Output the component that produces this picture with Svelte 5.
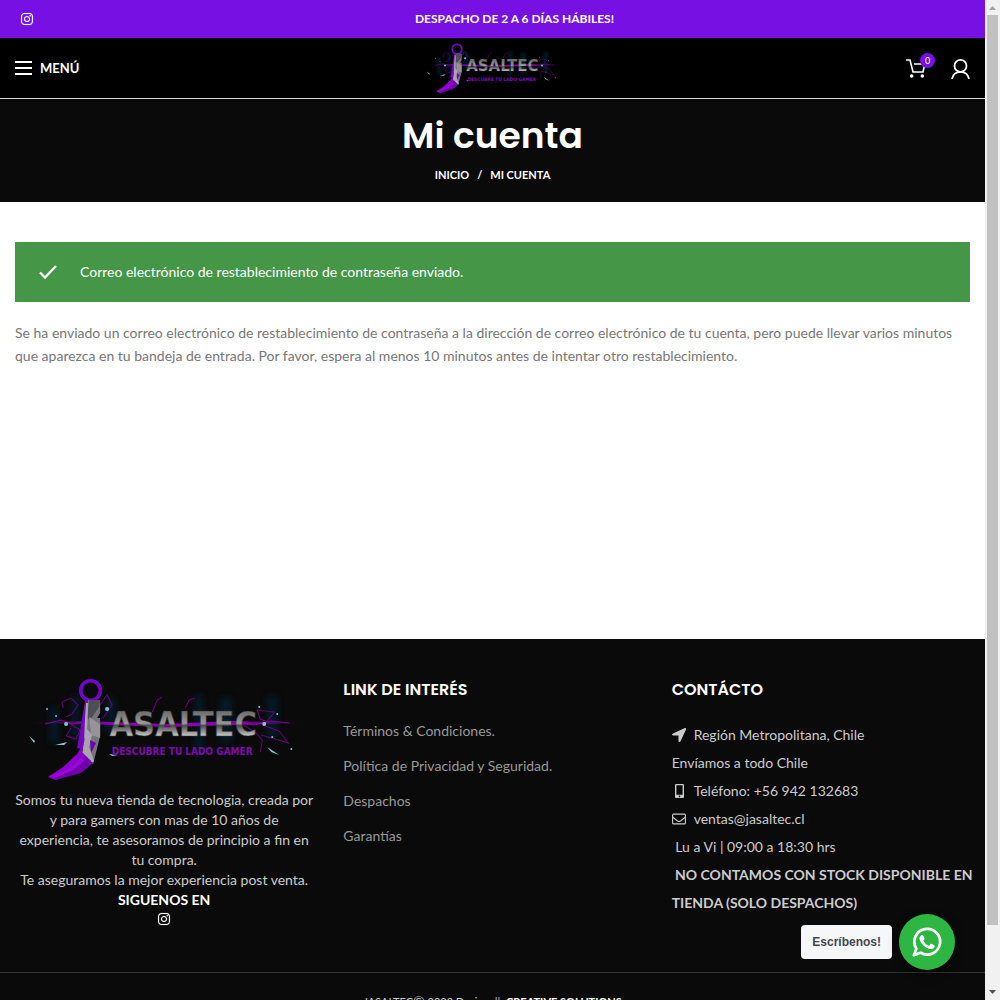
<script>
  const links = ['Términos & Condiciones.', 'Política de Privacidad y Seguridad.', 'Despachos', 'Garantías'];
</script>

{#snippet instagram()}
  <svg class="insta" viewBox="0 0 448 512" aria-hidden="true">
    <path d="M224 141c-64 0-115 51-115 115s51 115 115 115 115-51 115-115-51-115-115-115zm0 190c-41 0-75-34-75-75s34-75 75-75 75 34 75 75-34 75-75 75zM371 136a27 27 0 1 1-54 0 27 27 0 0 1 54 0zm76 27c-2-36-10-68-36-94s-58-34-94-36c-37-2-148-2-185 0-36 2-67 10-94 36S4 127 2 163c-2 37-2 148 0 185 2 36 10 68 36 94s58 34 94 36c37 2 148 2 185 0 36-2 68-10 94-36s34-58 36-94c2-37 2-148 0-185zm-48 225a76 76 0 0 1-43 43c-29 12-99 9-132 9s-103 3-132-9a76 76 0 0 1-43-43c-12-29-9-99-9-132s-3-103 9-132a76 76 0 0 1 43-43c29-12 99-9 132-9s103-3 132 9a76 76 0 0 1 43 43c12 29 9 99 9 132s3 103-9 132z" />
  </svg>
{/snippet}

{#snippet logo(id)}
  <svg class="logo" viewBox="0 0 298 105" role="img" aria-label="Jasaltec, descubre tu lado gamer">
    <defs>
      <linearGradient id="{id}-metal" x1="0" y1="0" x2="0" y2="1">
        <stop offset="0.2" stop-color="#6f6f6f" />
        <stop offset="0.48" stop-color="#9a9a9a" />
        <stop offset="0.54" stop-color="#4b4b4b" />
        <stop offset="0.8" stop-color="#cacaca" />
      </linearGradient>
      <linearGradient id="{id}-beam">
        <stop offset="0" stop-color="#8b00b0" stop-opacity="0" />
        <stop offset="0.3" stop-color="#8d00b0" />
        <stop offset="0.75" stop-color="#8d00b0" />
        <stop offset="1" stop-color="#8b00b0" stop-opacity="0" />
      </linearGradient>
      <filter id="{id}-glow" x="-20%" y="-20%" width="140%" height="140%"><feGaussianBlur stdDeviation="3" /></filter>
    </defs>
    <g fill="#06263d" opacity=".6" filter="url(#{id}-glow)">
      <path d="M35 30h8v35h-8zM57 18h7v45h-7zM91 20h9v35h-9zM180 17h8v55h-8zM205 20h12v45h-12zM252 18h10v42h-10z" />
    </g>
    <path d="M12 45L70 43L150 46L220 43L290 45L220 47L150 49L70 46Z" fill="url(#{id}-beam)" />
    <g fill="none" stroke="#86009f" stroke-width="1" opacity=".75">
      <path d="M48 30l-1-6 9-4 7 7-6 9-6 3M52 44l13 8-4 9-10-3 5-8M84 28l8-11 5 10-9 13M228 47l12 7 7 8-2 12M252 44l-7-3-3-9 17 2-11 14M250 48l14 5 9 12-10-3-17-5M137 34l5-12 5-3M170 30l4-8 6-2" />
      <path d="M30 46l16-4 12 4 16-3M222 43l16 4 18-4 18 2" stroke="#a000b8" />
    </g>
    <g fill="#85c7d0">
      <circle cx="51" cy="46" r="2" /><circle cx="92" cy="31" r="2" /><circle cx="41" cy="38" r="1" />
      <circle cx="249" cy="46" r="2" /><circle cx="244" cy="29" r="1" /><circle cx="262" cy="36" r="1" />
      <circle cx="32" cy="31" r="1" /><circle cx="257" cy="59" r="1" /><circle cx="276" cy="71" r="1" />
      <path d="M14 58l6 5-1 2zM252 69l12 8-8-3zM40 67l12-3-3 3zM94 76l9 1-6 1z" />
    </g>
    <circle cx="75.500" cy="12.500" r="9.800" fill="none" stroke="#7405c4" stroke-width="3.600" />
    <path d="M70 23h15l-3 17-7 8-6 24-7-2z" fill="#7408bd" />
    <path d="M73 22h12v13l-3 5h3v18l-7 28-11-9 4-20-1-12z" fill="#77757c" />
    <path d="M74 22h11l-1 7-9 13-3-2z" fill="#504e55" />
    <path d="M74 39l11 7v14l-9-3z" fill="#96939b" />
    <path d="M71 25h2l-1 31-3 5 1-22zM71 50l6 7-3 12 5 14-2 2-10-9 3-18z" fill="#aaa5ad" />
    <path d="M75 62l6 3-5 10z" fill="#6c00bd" />
    <path d="M67 68l-5 8-14 13-15 10 8 3 23-9 12-10-9-9z" fill="#8b00cc" />
    <path d="M33 99l22-8 14-13 9 7-12 10-26 7z" fill="#7000ac" />
    <path d="M34 98l18-6 14-12 3 3-13 10-17 7z" fill="#a100de" />
    <text class="logo-name" x="168" y="58" text-anchor="middle" fill="url(#{id}-metal)" stroke="#333" stroke-width=".5">ASALTEC</text>
    <text class="logo-tag" x="167" y="77" text-anchor="middle" fill="#7d0ab0">DESCUBRE TU LADO GAMER</text>
  </svg>
{/snippet}

<div class="window">
  <div class="page">
    <div class="topbar">
      <a class="social" href="#instagram" aria-label="Instagram">{@render instagram()}</a>
      <strong>DESPACHO DE 2 A 6 DÍAS HÁBILES!</strong>
    </div>

    <header>
      <button class="menu">
        <svg width="17" height="14" viewBox="0 0 17 14" aria-hidden="true"><path d="M0 0h17v2H0zM0 6h17v2H0zM0 12h17v2H0z" fill="#fff" /></svg>
        MENÚ
      </button>
      <a class="brand" href="#inicio">{@render logo('head')}</a>
      <div class="tools">
        <a class="cart" href="#carrito" aria-label="Carrito">
          <svg width="20" height="20" viewBox="0 0 20 20" fill="none" stroke="#fff" stroke-width="1.600" aria-hidden="true">
            <path d="M0 1h4l3 12h10l2-9M8 5h11" /><circle cx="5.700" cy="17" r="1.800" fill="#fff" stroke="none" /><circle cx="16.300" cy="17" r="1.800" fill="#fff" stroke="none" />
          </svg>
          <span class="badge">0</span>
        </a>
        <a href="#cuenta" aria-label="Mi cuenta">
          <svg width="19" height="20" viewBox="0 0 19 20" fill="none" stroke="#fff" stroke-width="1.800" aria-hidden="true">
            <circle cx="9.500" cy="6.900" r="6" /><path d="M1 20c1-5 4-7.100 8.500-7.100s7.500 2.100 8.500 7.100" />
          </svg>
        </a>
      </div>
    </header>

    <section class="title">
      <h1>Mi cuenta</h1>
      <nav aria-label="Ruta"><a href="#inicio">INICIO</a><span>/</span><span>MI CUENTA</span></nav>
    </section>

    <main>
      <div class="alert" role="alert">
        <svg width="18" height="14" viewBox="0 0 18 14" aria-hidden="true"><path d="M1 7.500l5 5L17 1" fill="none" stroke="#fff" stroke-width="2.300" /></svg>
        Correo electrónico de restablecimiento de contraseña enviado.
      </div>
      <p>Se ha enviado un correo electrónico de restablecimiento de contraseña a la dirección de correo electrónico de tu cuenta, pero puede llevar varios minutos que aparezca en tu bandeja de entrada. Por favor, espera al menos 10 minutos antes de intentar otro restablecimiento.</p>
    </main>

    <footer>
      <div class="columns">
        <section class="about">
          {@render logo('foot')}
          <p>Somos tu nueva tienda de tecnologia, creada por y para gamers con mas de 10 años de experiencia, te asesoramos de principio a fin en tu compra.<br />Te aseguramos la mejor experiencia post venta.</p>
          <strong>SIGUENOS EN</strong>
          <a class="social" href="#instagram" aria-label="Instagram">{@render instagram()}</a>
        </section>
        <section>
          <h2>LINK DE INTERÉS</h2>
          <ul>
            {#each links as link}
              <li><a href="#info">{link}</a></li>
            {/each}
          </ul>
        </section>
        <section>
          <h2>CONTÁCTO</h2>
          <address>
            <div class="line"><svg width="14" height="14" viewBox="0 0 14 14" aria-hidden="true"><path d="M13 0L1 5.500C-.5 6 0 7.500 1 7.500h5.500V13c0 1 1.500 1.500 2 .3L14 1.500C14.300.5 13.800-.2 13 0z" fill="#ccc" /></svg>Región Metropolitana, Chile</div>
            <div>Envíamos a todo Chile</div>
            <div class="line"><svg width="14" height="14" viewBox="0 0 14 14" aria-hidden="true"><path fill-rule="evenodd" d="M4 0h7a1 1 0 0 1 1 1v12a1 1 0 0 1-1 1H4a1 1 0 0 1-1-1V1a1 1 0 0 1 1-1zm.4 1.300v9.400h6.200V1.300zM7.500 11.500a.8.800 0 1 0 .01 0z" fill="#ccc" /></svg>Teléfono: +56 942 132683</div>
            <div class="line"><svg width="14" height="14" viewBox="0 0 14 14" aria-hidden="true"><rect x=".6" y="2.100" width="12.800" height="9.800" rx="1" fill="none" stroke="#ccc" stroke-width="1.100" /><path d="M.6 5l4.900 4q1.500 1.100 3 0l4.900-4" fill="none" stroke="#ccc" stroke-width="1.100" /></svg>ventas@jasaltec.cl</div>
            <div>&nbsp;Lu a Vi | 09:00 a 18:30 hrs</div>
            <strong>&nbsp;NO CONTAMOS CON STOCK DISPONIBLE EN<br />TIENDA (SOLO DESPACHOS)</strong>
          </address>
        </section>
      </div>
      <div class="copyright">JASALTEC<span class="mark">©</span> 2022 Design &nbsp;|| &nbsp;<strong>CREATIVE SOLUTIONS</strong></div>
    </footer>
  </div>

  <div class="scrollbar" aria-hidden="true">
    <svg width="15" height="15" viewBox="0 0 15 15"><path d="M4 10h7L7.500 6z" fill="#a3a3a3" /></svg>
    <div class="thumb"></div>
    <svg width="15" height="15" viewBox="0 0 15 15"><path d="M4 5h7L7.500 9z" fill="#505050" /></svg>
  </div>

  <div class="chat">
    <span>Escríbenos!</span>
    <button aria-label="WhatsApp">
      <svg width="30" height="30" viewBox="0 0 24 24" fill="#fff" aria-hidden="true"><path d="M17.472 14.382c-.297-.149-1.758-.867-2.030-.967-.273-.099-.471-.148-.670.150-.197.297-.767.966-.940 1.164-.173.199-.347.223-.644.075-.297-.150-1.255-.463-2.390-1.475-.883-.788-1.480-1.761-1.653-2.059-.173-.297-.018-.458.130-.606.134-.133.298-.347.446-.520.149-.174.198-.298.298-.497.099-.198.050-.371-.025-.520-.075-.149-.669-1.612-.916-2.207-.242-.579-.487-.500-.669-.510-.173-.008-.371-.010-.570-.010-.198 0-.520.074-.792.372-.272.297-1.040 1.016-1.040 2.479 0 1.462 1.065 2.875 1.213 3.074.149.198 2.096 3.200 5.077 4.487.709.306 1.262.489 1.694.625.712.227 1.360.195 1.871.118.571-.085 1.758-.719 2.006-1.413.248-.694.248-1.289.173-1.413-.074-.124-.272-.198-.570-.347z" /><path d="M3.500 17.300L1.500 22.500l5.400-1.900A10.300 10.300 0 1 0 3.500 17.300z" fill="none" stroke="#fff" stroke-width="2.200" stroke-linejoin="round" /></svg>
    </button>
  </div>
</div>

<style>
  :global(body) { margin: 0; }
  * { box-sizing: border-box; }
  a { color: inherit; text-decoration: none; }
  button { border: 0; padding: 0; background: none; color: inherit; font: inherit; cursor: pointer; }
  p, h1, h2, ul { margin: 0; padding: 0; }
  strong { font-weight: 700; }
  svg { display: block; flex: none; }

  .window { display: flex; height: 100vh; overflow: hidden; font: 14px/22px Lato, sans-serif; color: #777; }
  .page { flex: 1; min-width: 0; }
  .insta { width: 12px; height: 14px; overflow: visible; fill: #fff; stroke: #fff; stroke-width: 5; }

  .topbar { display: grid; grid-template-columns: 58px 1fr 14px; align-items: center; height: 38px; padding: 0 15px; background: #7710e2; color: #fff; font-size: 12px; text-align: center; }
  .topbar .social { padding-left: 6px; }

  header { display: grid; grid-template-columns: 1fr 146px 1fr; align-items: center; height: 61px; padding: 0 15px; background: #000; color: #fff; border-bottom: 1px solid #ddd; }
  .menu { display: flex; align-items: center; justify-self: start; gap: 8px; font-size: 13px; font-weight: 700; }
  .brand, .tools { padding-top: 2px; }
  .tools { display: flex; justify-content: flex-end; gap: 25px; }
  .cart { position: relative; }
  .badge { position: absolute; top: -6px; left: 14px; width: 15px; height: 15px; border-radius: 50%; background: #7710e2; font-size: 9px; line-height: 15px; text-align: center; }

  .logo { width: 100%; height: auto; }
  .logo-name { font: 700 34px 'DejaVu Sans Condensed', sans-serif; }
  .logo-tag { font: 700 10px 'DejaVu Sans Condensed', sans-serif; }

  .title { padding: 15px 15px 16px; background: #0a0a0a; color: #fff; text-align: center; }
  h1 { font: 600 36px/44px Poppins, Inter, sans-serif; }
  nav { display: flex; justify-content: center; gap: 8px; padding-top: 6px; font-size: 11px; font-weight: 700; }

  main { min-height: 437px; padding: 40px 15px; }
  main p { line-height: 23px; }
  .alert { display: flex; align-items: center; gap: 23px; min-height: 60px; margin-bottom: 19px; padding: 10px 24px; background: #459647; color: #fff; }

  footer { background: #0a0a0a; color: #ccc; }
  .columns { display: grid; grid-template-columns: repeat(3, minmax(0, 1fr)); gap: 30px; min-height: 333px; padding: 39px 15px 40px; }
  .about { display: flex; flex-direction: column; align-items: center; line-height: 20px; text-align: center; }
  .about p { padding-top: 7px; }
  .about strong { color: #fff; }
  .about .social { padding-top: 2px; }
  h2 { color: #fff; font: 600 16px/23px Poppins, Inter, sans-serif; }
  ul { display: grid; gap: 13px; padding-top: 19px; color: #999; list-style: none; }
  address { padding-top: 20px; font-style: normal; line-height: 28px; }
  address strong { white-space: nowrap; }
  .line { display: flex; align-items: center; gap: 8px; }
  .copyright { padding: 18px 15px; border-top: 1px solid #333; font-size: 11px; text-align: center; white-space: nowrap; }
  .copyright strong { color: #fff; }
  .mark { font-size: 14px; line-height: 20px; }

  .scrollbar { display: flex; flex-direction: column; flex: none; width: 15px; background: #f1f1f1; }
  .thumb { flex: 0 0 91%; width: 11px; margin: 0 2px; background: #c1c1c1; }
  .scrollbar svg:last-child { margin-top: auto; }

  .chat { position: fixed; right: 45px; bottom: 30px; display: flex; align-items: center; gap: 7px; }
  .chat span { padding: 6px 11px 5px; border-radius: 4px; background: #f5f7f9; color: #43474e; font: 700 12px/23px 'Liberation Sans', sans-serif; }
  .chat button { display: grid; place-items: center; width: 56px; height: 56px; border-radius: 50%; background: #2db742; box-shadow: 0 4px 12px rgb(0 0 0 / 40%); }
</style>
